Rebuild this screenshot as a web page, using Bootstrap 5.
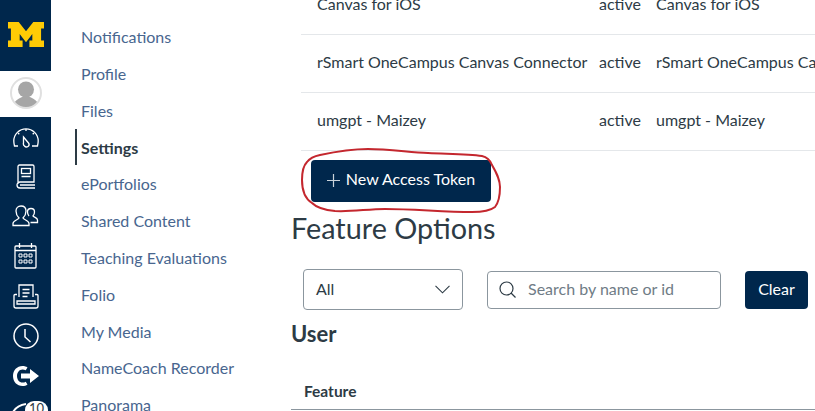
<!DOCTYPE html>
<html lang="en">
<head>
  <meta charset="UTF-8" />
  <title>Settings</title>
  <link href="https://cdn.jsdelivr.net/npm/bootstrap@5.3.3/dist/css/bootstrap.min.css" rel="stylesheet" />
  <style>
    html, body { height: 411px; overflow: hidden; }
    body { font-family: Lato, "Liberation Sans", sans-serif; color: #2d3b45; background: #fff; }

    .app-shell { height: 411px; width: 815px; position: relative; overflow: hidden; }

    /* left rail */
    .rail { width: 51px; height: 411px; background: #00274c; flex: none; overflow: hidden; }
    .rail-logo { height: 71px; flex: none; padding-bottom: 3px; }
    .rail-avatar { height: 46px; flex: none; background: #fff; padding-bottom: 2px; }
    .avatar-circle { width: 32px; height: 32px; display: block; }
    .rail-icons { flex: none; }
    .rail-btn { height: 39.8px; color: #fff; position: relative; }
    .rail-btn svg { display: block; }
    .rail-count { position: absolute; left: 25px; top: 5px; background: #fff; color: #2d3b45; border-radius: 10px; font-size: 13px; line-height: 13px; padding-top: 1px; width: 23px; height: 18px; text-align: center; }
    .rail-bell { position: absolute; left: 11px; top: 6px; }

    /* course-style nav */
    .side-nav { width: 240px; flex: none; padding: 18.2px 0 0 24px; }
    .side-link { display: block; height: 36.8px; line-height: 37px; padding-left: 6px; font-size: 16px; color: #48668f; text-decoration: none; white-space: nowrap; }
    .side-link.current { font-weight: 700; color: #2d3b45; border-left: 2px solid #2d3b45; padding-left: 4px; }

    /* main */
    .main-col { flex: 1; min-width: 0; overflow: hidden; }
    .token-table { margin: -24px 0 0 10px; width: 600px; table-layout: fixed; font-size: 16px; }
    .token-table td { height: 58px; padding: 0 0 2px 16px; vertical-align: middle; border-bottom: 1px solid #e4e7ea; white-space: nowrap; overflow: hidden; color: #2d3b45; background: transparent; }
    .token-table td.col-name { width: 298px; }
    .token-table td.col-state { width: 57px; padding-left: 0; }
    .token-table td.col-app { padding-left: 0; }

    .btn-navy { background: #00274c; color: #fff; border: 0; border-radius: 4px; font-size: 16px; }
    .btn-navy:hover { background: #00274c; color: #fff; }
    .btn-token { width: 180px; height: 42px; margin: 9px 0 0 20px; padding: 0 0 3px; gap: 6px; }
    .btn-token svg { margin-top: 3px; }
    .btn-clear { width: 63px; height: 38px; padding: 0 0 2px; margin: 1px 0 0 24px; }

    .title-feature { font-size: 28.8px; font-weight: 400; line-height: 34px; margin: 9px 0 0 0; color: #2d3b45; }
    .filter-row { margin: 24px 0 0 12px; }
    .pick-box { width: 160px; height: 41px; border: 1px solid #8b969e; border-radius: 4px; padding: 0 12px; font-size: 16px; }
    .search-box { width: 234px; height: 38px; border: 1px solid #8b969e; border-radius: 4px; margin: 1px 0 0 24px; padding: 0 11px 2px; font-size: 16px; color: #6f7c86; }
    .search-box svg { margin-top: 2px; }
    .title-user { font-size: 22px; font-weight: 700; line-height: 26px; margin: 11px 0 0 0; color: #2d3b45; }
    .feature-head { margin: 32px 0 0 0; height: 31px; padding-left: 13px; font-weight: 700; font-size: 15.5px; border-bottom: 1px solid #8b969e; line-height: 24px; }

    .scribble { position: absolute; left: 298px; top: 146px; width: 206px; height: 70px; pointer-events: none; }
  </style>
</head>
<body>
<div class="app-shell d-flex">
  <div class="rail d-flex flex-column flex-shrink-0">
    <div class="rail-logo d-flex align-items-center justify-content-center">
      <svg width="36" height="25" viewBox="0 0 37 27" preserveAspectRatio="none"><path fill="#ffcb05" d="M0 0h11l7.500 10L26 0h11v7h-3v13h3v7H22v-7h3v-7l-6.500 9-6.500-9v7h3v7H0v-7h3V7H0z"/></svg>
    </div>
    <div class="rail-avatar d-flex align-items-center justify-content-center">
      <svg class="avatar-circle" viewBox="0 0 32 32"><defs><clipPath id="ac"><circle cx="16" cy="16" r="15"/></clipPath></defs><circle cx="16" cy="16" r="15" fill="#fff"/><g clip-path="url(#ac)" fill="#a6a6a6"><circle cx="16" cy="12.500" r="8"/><path d="M3 32c0-8 5-10 9-12h8c4 2 9 4 9 12z"/></g><circle cx="16" cy="16" r="15" fill="none" stroke="#e0e0e0" stroke-width="2"/></svg>
    </div>
    <div class="rail-icons">
      <div class="rail-btn d-flex align-items-center justify-content-center">
        <svg width="26" height="22" viewBox="0 0 26 22" fill="none" stroke="#fff" stroke-width="1.300"><path d="M5 20H1.500C1 18 .8 16.500 .8 15a12.200 12.200 0 0 1 24.400 0c0 1.500-.2 3-.7 5H19"/><path d="M13 3v2M5 7l1.300 1.300M21 7l-1.300 1.300"/><path d="M10.500 11l5 6a2.500 2.500 0 0 1-4 3 2.800 2.800 0 0 1-1-3z"/></svg>
      </div>
      <div class="rail-btn d-flex align-items-center justify-content-center">
        <svg width="20" height="25" viewBox="0 0 20 25" fill="none" stroke="#fff" stroke-width="1.300"><path d="M2 20V2.500A1.500 1.500 0 0 1 3.500 1h13A1.500 1.500 0 0 1 18 2.500V18H4a2.500 2.500 0 0 0 0 6h15"/><rect x="5.500" y="4.500" width="9" height="5"/><path d="M5.500 12.500h9M4 21h15"/></svg>
      </div>
      <div class="rail-btn d-flex align-items-center justify-content-center">
        <svg width="27" height="22" viewBox="0 0 27 22" fill="none" stroke="#fff" stroke-width="1.300"><path d="M1 20.500v-2c0-3 5-3.500 6-5.500-2-2-3-4-3-7 0-3 2-5 5-5s5 2 5 5c0 3-1 5-3 7 1 2 6 2.500 6 5.500v2z"/><path d="M17 11c-1-1-1.500-2.500-1.500-4 0-2 1.200-3.500 3.500-3.500s3.500 1.500 3.500 3.500c0 1.500-.5 3-1.500 4 .5 1.200 4.500 1.500 4.500 4v2.500h-7"/></svg>
      </div>
      <div class="rail-btn d-flex align-items-center justify-content-center">
        <svg width="23" height="26" viewBox="0 0 23 26" fill="none" stroke="#fff" stroke-width="1.300"><rect x="1" y="3" width="21" height="22" rx="1"/><path d="M1 7.500h21M5.500 0v5M17.500 0v5"/><path stroke-width="1" d="M5 11h3v3H5zM10 11h3v3h-3zM15 11h3v3h-3zM5 17h3v3H5zM10 17h3v3h-3zM15 17h3v3h-3z"/></svg>
      </div>
      <div class="rail-btn d-flex align-items-center justify-content-center">
        <svg width="26" height="25" viewBox="0 0 26 25" fill="none" stroke="#fff" stroke-width="1.300"><path d="M6 13V1h14v12"/><path d="M9.500 5.500h7M9.500 9h7M9.500 12.500h5"/><path d="M4 10.500H2A1 1 0 0 0 1 11.500V22a2 2 0 0 0 2 2h20a2 2 0 0 0 2-2V11.500a1 1 0 0 0-1-1h-2"/><path d="M4 17h18v3H4z"/></svg>
      </div>
      <div class="rail-btn d-flex align-items-center justify-content-center">
        <svg width="26" height="26" viewBox="0 0 26 26" fill="none" stroke="#fff" stroke-width="1.500"><circle cx="13" cy="13" r="12"/><path d="M12 6v8l5.500 5"/></svg>
      </div>
      <div class="rail-btn d-flex align-items-center justify-content-center">
        <svg width="26" height="20" viewBox="0 0 26 20"><path fill="#fff" d="M9.500 0C4 0 0 4.300 0 10s4 10 9.500 10c2 0 3.700-.5 5-1.500l-1.800-2.800c-1 .6-2 .9-3.200.9C6.300 16.600 4 13.700 4 10s2.300-6.600 5.500-6.600c1.200 0 2.200.3 3.200.9l1.800-2.800C13.200.5 11.500 0 9.500 0z"/><path fill="#fff" d="M17 3l9 7-9 7v-4.500H8v-5h9z"/></svg>
      </div>
      <div class="rail-btn">
        <svg class="rail-bell" width="16" height="12" viewBox="0 0 16 12" fill="none" stroke="#fff" stroke-width="2"><path d="M1.500 11C4 6 8 3 15 2"/></svg>
        <span class="rail-count">10</span>
      </div>
    </div>
  </div>

  <nav class="side-nav flex-shrink-0">
    <a class="side-link" href="#">Notifications</a>
    <a class="side-link" href="#">Profile</a>
    <a class="side-link" href="#">Files</a>
    <a class="side-link current" href="#">Settings</a>
    <a class="side-link" href="#">ePortfolios</a>
    <a class="side-link" href="#">Shared Content</a>
    <a class="side-link" href="#">Teaching Evaluations</a>
    <a class="side-link" href="#">Folio</a>
    <a class="side-link" href="#">My Media</a>
    <a class="side-link" href="#">NameCoach Recorder</a>
    <a class="side-link" href="#">Panorama</a>
  </nav>

  <div class="main-col">
    <table class="table token-table mb-0">
      <tbody>
        <tr><td class="col-name">Canvas for iOS</td><td class="col-state">active</td><td class="col-app">Canvas for iOS</td></tr>
        <tr><td class="col-name">rSmart OneCampus Canvas Connector</td><td class="col-state">active</td><td class="col-app">rSmart OneCampus Canvas Connector</td></tr>
        <tr><td class="col-name">umgpt - Maizey</td><td class="col-state">active</td><td class="col-app">umgpt - Maizey</td></tr>
      </tbody>
    </table>

    <button class="btn btn-navy btn-token d-flex align-items-center justify-content-center" type="button">
      <svg width="13" height="13" viewBox="0 0 13 13" fill="none" stroke="#c9d2da" stroke-width="1.200"><path d="M6.500 0v13M0 6.500h13"/></svg>
      New Access Token
    </button>

    <h2 class="title-feature">Feature Options</h2>

    <div class="filter-row d-flex align-items-center">
      <div class="pick-box d-flex align-items-center justify-content-between">
        <span>All</span>
        <svg width="15" height="9" viewBox="0 0 15 9" fill="none" stroke="#2d3b45" stroke-width="1.100"><path d="M.5.800l7 7 7-7"/></svg>
      </div>
      <div class="search-box d-flex align-items-center gap-2">
        <svg width="17" height="17" viewBox="0 0 17 17" fill="none" stroke="#2d3b45" stroke-width="1.200"><circle cx="7.500" cy="7.500" r="6.500"/><path d="M12 12l4.500 4.500"/></svg>
        <span class="ms-1">Search by name or id</span>
      </div>
      <button class="btn btn-navy btn-clear" type="button">Clear</button>
    </div>

    <h3 class="title-user">User</h3>
    <div class="feature-head">Feature</div>
  </div>

  <svg class="scribble" viewBox="0 0 206 70" fill="none" stroke="#c4272e" stroke-width="2"><path d="M4 34C4 26 5 20 9 16c3-4 8-6 13-7C36 6 52 3 70 3c20 0 40 3 60 4 20 1 40 1 54 3 5 1 8 4 10 9 4 7 8 14 8 22 0 9-1 15-5 20-5 4-14 5-23 5-29 0-58-3-87-3-17 0-34 3-50 2-11-1-19-4-23-8C6 52 4 43 4 34z"/></svg>
</div>
<script src="https://cdn.jsdelivr.net/npm/bootstrap@5.3.3/dist/js/bootstrap.bundle.min.js"></script>
</body>
</html>
